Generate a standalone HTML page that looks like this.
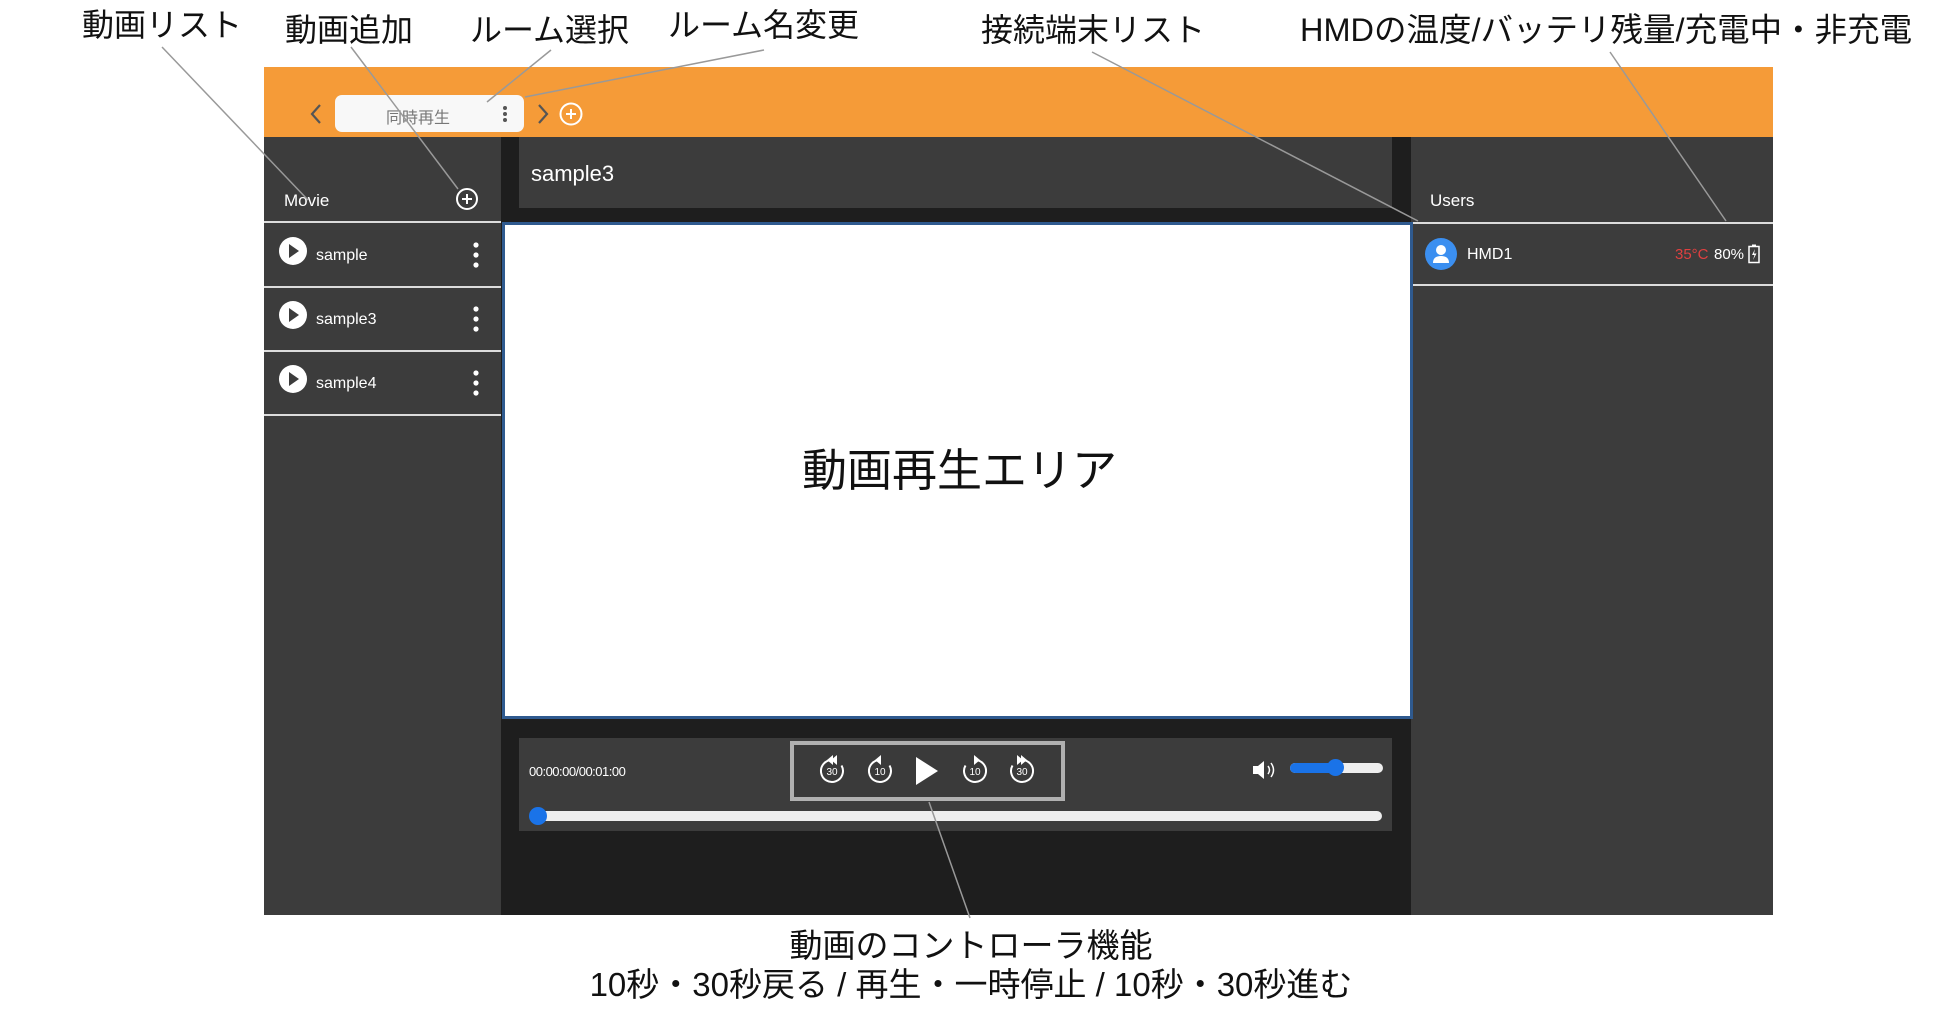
<!DOCTYPE html>
<html><head><meta charset="utf-8"><style>
*{margin:0;padding:0;box-sizing:border-box}
body{width:1950px;height:1027px;background:#fff;position:relative;overflow:hidden;font-family:"Liberation Sans","Noto Sans CJK JP",sans-serif}
.a{position:absolute}
.lbl{position:absolute;font-size:32px;color:#111;white-space:nowrap;font-family:"Liberation Sans","Noto Sans CJK JP",sans-serif;line-height:1}
.w{color:#fff}
</style></head><body>
<div class="a" style="left:264px;top:67px;width:1509px;height:70px;background:#f59b38"></div>
<div class="a" style="left:264px;top:137px;width:237px;height:778px;background:#3c3c3c"></div>
<div class="a" style="left:501px;top:137px;width:910px;height:778px;background:#1e1e1e"></div>
<div class="a" style="left:519px;top:137px;width:873px;height:71px;background:#3c3c3c"></div>
<div class="a w" style="left:531px;top:161px;font-size:22px">sample3</div>
<div class="a" style="left:1411px;top:137px;width:362px;height:778px;background:#3c3c3c"></div>
<div class="a w" style="left:1430px;top:191px;font-size:17px">Users</div>
<div class="a" style="left:1411px;top:222px;width:362px;height:2px;background:#ddd"></div>
<div class="a" style="left:1411px;top:284px;width:362px;height:2px;background:#ddd"></div>
<div class="a" style="left:1425px;top:238px;width:32px;height:32px;border-radius:50%;background:#3b8ff0"></div>
<svg class="a" style="left:1425px;top:238px" width="32" height="32"><circle cx="16" cy="12" r="5" fill="#fff"/><path d="M8 25 Q8 18 16 18 Q24 18 24 25 Z" fill="#fff"/></svg>
<div class="a w" style="left:1467px;top:246px;font-size:16px">HMD1</div>
<div class="a" style="left:1675px;top:246px;font-size:15px;color:#e04040">35°C</div>
<div class="a w" style="left:1714px;top:246px;font-size:15px">80%</div>
<svg class="a" style="left:1748px;top:244px" width="12" height="20"><rect x="4" y="0.5" width="4" height="2" fill="#fff"/><rect x="1" y="2.5" width="10" height="16" fill="none" stroke="#fff" stroke-width="1.5"/><path d="M7 5 L4 11 L6.5 11 L5 16 L8.5 9.5 L6 9.5 Z" fill="#fff"/></svg>
<div class="a" style="left:502px;top:222px;width:911px;height:497px;background:#fff;border:3px solid #2f5a8f"></div>
<div class="a" style="left:504px;top:434px;width:911px;text-align:center;font-size:45px;color:#111">動画再生エリア</div>
<div class="a" style="left:519px;top:738px;width:873px;height:93px;background:#3c3c3c"></div>
<div class="a w" style="left:529px;top:764px;font-size:13px;letter-spacing:-0.5px">00:00:00/00:01:00</div>
<div class="a" style="left:790px;top:741px;width:275px;height:60px;border:4px solid #b0b0b0;background:#3a3a3a"></div>
<svg class="a" style="left:790px;top:741px" width="275" height="60">
<g fill="none" stroke="#fff" stroke-width="2">
<path d="M42 19 A11 11 0 1 0 51.5 24.5"/><path d="M90 19 A11 11 0 1 0 99.5 24.5"/>
<path d="M185 19 A11 11 0 1 1 175.5 24.5"/><path d="M232 19 A11 11 0 1 1 222.5 24.5"/>
</g>
<g fill="#fff">
<path d="M43 14 L37 19 L43 24Z"/><path d="M47 14 L41 19 L47 24Z"/>
<path d="M91 14 L85 19 L91 24Z"/>
<path d="M184 14 L190 19 L184 24Z"/>
<path d="M231 14 L237 19 L231 24Z"/><path d="M227 14 L233 19 L227 24Z"/>
<path d="M126 16 L148 30 L126 44Z"/>
</g>
<g fill="#fff" font-size="10" font-family="Liberation Sans" text-anchor="middle">
<text x="42" y="34">30</text><text x="90" y="34">10</text><text x="185" y="34">10</text><text x="232" y="34">30</text>
</g>
</svg>
<svg class="a" style="left:1251px;top:759px" width="30" height="22"><path d="M2 7 H7 L13 2 V20 L7 15 H2Z" fill="#fff"/><path d="M17 7 Q20 11 17 15 M20 4 Q25 11 20 18" stroke="#fff" stroke-width="1.5" fill="none"/></svg>
<div class="a" style="left:1290px;top:763px;width:93px;height:10px;border-radius:5px;background:#eee"></div>
<div class="a" style="left:1290px;top:763px;width:48px;height:10px;border-radius:5px;background:#1a73e8"></div>
<div class="a" style="left:1327px;top:759px;width:17px;height:17px;border-radius:50%;background:#1a73e8"></div>
<div class="a" style="left:537px;top:811px;width:845px;height:10px;border-radius:5px;background:#eee"></div>
<div class="a" style="left:529px;top:807px;width:18px;height:18px;border-radius:50%;background:#1a73e8"></div>
<div class="a w" style="left:284px;top:191px;font-size:17px">Movie</div>
<svg class="a" style="left:455px;top:187px" width="24" height="24"><circle cx="12" cy="12" r="10" fill="none" stroke="#fff" stroke-width="2"/><path d="M12 7V17M7 12H17" stroke="#fff" stroke-width="2"/></svg>
<div class="a" style="left:264px;top:221px;width:237px;height:2px;background:#ddd"></div>
<div class="a" style="left:264px;top:286px;width:237px;height:2px;background:#ddd"></div>
<div class="a" style="left:264px;top:350px;width:237px;height:2px;background:#ddd"></div>
<div class="a" style="left:264px;top:414px;width:237px;height:2px;background:#ddd"></div>
<svg class="a" style="left:264px;top:224px" width="237" height="192">
<g fill="#fff"><circle cx="29" cy="27" r="14"/><circle cx="29" cy="91" r="14"/><circle cx="29" cy="155" r="14"/>
<circle cx="212" cy="21" r="2.6"/><circle cx="212" cy="31" r="2.6"/><circle cx="212" cy="41" r="2.6"/>
<circle cx="212" cy="85" r="2.6"/><circle cx="212" cy="95" r="2.6"/><circle cx="212" cy="105" r="2.6"/>
<circle cx="212" cy="149" r="2.6"/><circle cx="212" cy="159" r="2.6"/><circle cx="212" cy="169" r="2.6"/></g>
<g fill="#3c3c3c"><path d="M25 20L35 27L25 34Z"/><path d="M25 84L35 91L25 98Z"/><path d="M25 148L35 155L25 162Z"/></g>
</svg>
<div class="a w" style="left:316px;top:247px;font-size:16px">sample</div>
<div class="a w" style="left:316px;top:311px;font-size:16px">sample3</div>
<div class="a w" style="left:316px;top:375px;font-size:16px">sample4</div>
<div class="a" style="left:335px;top:95px;width:189px;height:37px;border-radius:7px;background:#f8f8f8"></div>
<div class="a" style="left:386px;top:104px;font-size:16px;color:#777">同時再生</div>
<svg class="a" style="left:495px;top:100px" width="20" height="28"><g fill="#555"><circle cx="10" cy="8" r="2"/><circle cx="10" cy="14" r="2"/><circle cx="10" cy="20" r="2"/></g></svg>
<svg class="a" style="left:306px;top:102px" width="20" height="24"><path d="M14 3L6 12L14 21" stroke="#555" stroke-width="2.2" fill="none"/></svg>
<svg class="a" style="left:533px;top:102px" width="20" height="24"><path d="M6 3L14 12L6 21" stroke="#555" stroke-width="2.2" fill="none"/></svg>
<svg class="a" style="left:558px;top:101px" width="26" height="26"><circle cx="13" cy="13" r="10.5" fill="none" stroke="#fff" stroke-width="2"/><path d="M13 8V18M8 13H18" stroke="#fff" stroke-width="2"/></svg>
<svg class="a" style="left:0;top:0" width="1950" height="1027">
<g stroke="#999" stroke-width="1.5">
<line x1="162" y1="47" x2="308" y2="200"/>
<line x1="351" y1="47" x2="458" y2="189"/>
<line x1="551" y1="50" x2="487" y2="102"/>
<line x1="764" y1="50" x2="525" y2="97"/>
<line x1="1092" y1="52" x2="1418" y2="221"/>
<line x1="1610" y1="52" x2="1726" y2="221"/>
<line x1="929" y1="802" x2="970" y2="918"/>
</g></svg>
<div class="lbl" style="left:82px;top:9px">動画リスト</div>
<div class="lbl" style="left:285px;top:14px">動画追加</div>
<div class="lbl" style="left:470px;top:14px">ルーム選択</div>
<div class="lbl" style="left:668px;top:9px">ルーム名変更</div>
<div class="lbl" style="left:981px;top:14px">接続端末リスト</div>
<div class="lbl" style="left:1300px;top:14px;font-size:32.5px">HMDの温度/バッテリ残量/充電中・非充電</div>
<div class="lbl" style="left:-4px;width:1950px;text-align:center;top:929px;font-size:33px">動画のコントローラ機能</div>
<div class="lbl" style="left:-4px;width:1950px;text-align:center;top:968px;font-size:33px">10秒・30秒戻る / 再生・一時停止 / 10秒・30秒進む</div>
</body></html>
